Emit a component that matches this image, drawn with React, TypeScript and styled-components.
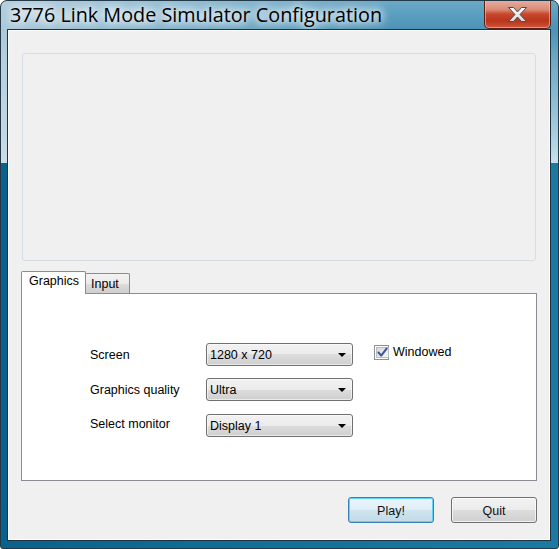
import React from "react";
import styled, { createGlobalStyle } from "styled-components";

const GlobalStyle = createGlobalStyle`
  html, body { margin: 0; padding: 0; width: 559px; height: 549px; overflow: hidden; background: #ffffff; }
  #root { width: 559px; height: 549px; }
  * { box-sizing: border-box; }
`;

const Window = styled.div`
  width: 559px;
  height: 549px;
  border: 1px solid #243a48;
  border-radius: 7px 7px 3px 3px;
  display: flex;
  flex-direction: column;
  overflow: hidden;
  background:
    linear-gradient(to right, #0a628c, #137099 50%, #1b7aa4) 0 162px / 100% 100% no-repeat,
    linear-gradient(to right, rgba(205, 220, 230, 0.75), rgba(205, 220, 230, 0.25) 45%, rgba(120, 180, 210, 0) 70%),
    linear-gradient(to bottom, #6aa9c7 0, #4c93b7 28px, #6fa9c5 60px, #a6cbdd 130px, #c7dfea 161px);
`;

const TitleBar = styled.div`
  height: 28px;
  flex: none;
  display: flex;
  align-items: flex-start;
`;

const Title = styled.div`
  margin: 1px 0 0 9px;
  font-family: "Open Sans", "Noto Sans", sans-serif;
  font-size: 19.8px;
  line-height: 26px;
  color: #000;
  white-space: nowrap;
  text-shadow: 0 0 8px #fff, 0 0 8px #fff, 0 0 14px rgba(255, 255, 255, 0.9);
`;

const CloseButton = styled.div`
  margin: -1px 7px 0 auto;
  width: 67px;
  height: 29px;
  border: 1px solid #5a2016;
  border-top: none;
  border-radius: 0 0 5px 5px;
  background: linear-gradient(to bottom, #e7b1a3 0%, #d98a75 35%, #c9482c 50%, #b9351c 75%, #d0583a 100%);
  box-shadow: inset 0 0 0 1px rgba(255, 200, 185, 0.55);
  display: flex;
  align-items: center;
  justify-content: center;
`;

const Client = styled.div`
  flex: 1;
  margin: 0 7px 7px 6px;
  border: 1px solid #1e3340;
  box-shadow: inset 0 0 0 1px #fbfdfe;
  background: #f0f0f0;
  padding: 0 13px;
  display: flex;
  flex-direction: column;
  font-family: "Liberation Sans", Arial, sans-serif;
  font-size: 12.5px;
  color: #000;
`;

const ImagePanel = styled.div`
  margin: 23px 1px 0 1px;
  height: 208px;
  border: 1px solid #d5dde6;
  border-radius: 3px;
  background: #f0f0f0;
`;

const TabStrip = styled.div`
  margin-top: 10px;
  height: 22px;
  display: flex;
  align-items: flex-end;
  position: relative;
  z-index: 1;
`;

const Tab = styled.div<{ $active?: boolean; $width: number }>`
  width: ${(p) => p.$width}px;
  height: ${(p) => (p.$active ? 23 : 20)}px;
  margin-bottom: ${(p) => (p.$active ? -1 : 0)}px;
  margin-left: ${(p) => (p.$active ? 0 : -1)}px;
  border: 1px solid #898c95;
  border-bottom: none;
  border-radius: 2px 2px 0 0;
  background: ${(p) =>
    p.$active ? "#ffffff" : "linear-gradient(to bottom, #f3f3f3 0%, #ebebeb 50%, #dddddd 51%, #cfcfcf 100%)"};
  padding: ${(p) => (p.$active ? "2px 0 0 7px" : "3px 0 0 5px")};
  line-height: 15px;
  position: relative;
  z-index: ${(p) => (p.$active ? 2 : 1)};
`;

const TabBody = styled.div`
  height: 188px;
  border: 1px solid #898c95;
  background: #ffffff;
  padding: 49px 0 0 68px;
`;

const FormGrid = styled.div`
  display: grid;
  grid-template-columns: 116px 168px auto;
  grid-template-rows: 23px 23px 23px;
  row-gap: 12px;
`;

const Label = styled.div<{ $nudge?: number }>`
  align-self: center;
  margin-top: ${(p) => p.$nudge ?? 0}px;
`;

const Combo = styled.div<{ $shift?: number }>`
  width: 147px;
  height: 23px;
  margin-top: ${(p) => p.$shift ?? 0}px;
  border: 1px solid #707070;
  border-radius: 3px;
  background: linear-gradient(to bottom, #f2f2f2 0%, #ebebeb 50%, #dddddd 50%, #cfcfcf 100%);
  box-shadow: inset 0 0 0 1px rgba(255, 255, 255, 0.55);
  display: flex;
  align-items: center;
  padding-left: 3px;
`;

const Arrow = styled.span`
  margin: 1px 6px 0 auto;
  width: 0;
  height: 0;
  border-left: 4px solid transparent;
  border-right: 4px solid transparent;
  border-top: 4px solid #000;
`;

const CheckRow = styled.div`
  display: flex;
  align-items: center;
  align-self: start;
  margin-top: 2px;
  gap: 4px;
  line-height: 15px;
`;

const CheckBox = styled.div`
  width: 15px;
  height: 15px;
  border: 1px solid #8f8f8f;
  background: #fff;
  padding: 1px;
  display: flex;
`;

const CheckInner = styled.div`
  flex: 1;
  border: 1px solid #b9bcc2;
  background: linear-gradient(135deg, #d5d8dd, #f7f7f7);
  display: flex;
  align-items: center;
  justify-content: center;
`;

const ButtonRow = styled.div`
  margin-top: 16px;
  display: flex;
  justify-content: flex-end;
  gap: 17px;
`;

const Button = styled.div<{ $default?: boolean }>`
  width: 86px;
  height: 26px;
  padding-top: 1px;
  border: 1px solid ${(p) => (p.$default ? "#3c7fb1" : "#707070")};
  border-radius: 3px;
  background: ${(p) =>
    p.$default
      ? "linear-gradient(to bottom, #eaf5fb 0%, #dfeef6 50%, #cfe4ef 51%, #c3dbe8 100%)"
      : "linear-gradient(to bottom, #f2f2f2 0%, #ebebeb 50%, #dddddd 51%, #cfcfcf 100%)"};
  box-shadow: ${(p) => (p.$default ? "inset 0 0 0 1px #5fd3f6" : "inset 0 0 0 1px rgba(255,255,255,0.7)")};
  display: flex;
  align-items: center;
  justify-content: center;
  color: #111;
`;

const CloseGlyph = () => (
  <svg width="21" height="17" viewBox="0 0 21 17">
    <defs>
      <linearGradient id="xg" x1="0" y1="0" x2="0" y2="1">
        <stop offset="0" stopColor="#ffffff" />
        <stop offset="1" stopColor="#d9d9d9" />
      </linearGradient>
    </defs>
    <polygon
      points="1.5,1.5 6.5,1.5 10.5,6 14.5,1.5 19.5,1.5 13,8.5 19.5,15.5 14.5,15.5 10.5,11 6.5,15.5 1.5,15.5 8,8.5"
      fill="url(#xg)"
      stroke="#4d4d4d"
      strokeWidth="1"
      strokeLinejoin="round"
    />
  </svg>
);

const CheckMark = () => (
  <svg width="11" height="11" viewBox="0 0 11 11">
    <path d="M1.5 5.5 L4.2 8.6 L9.6 1.6" fill="none" stroke="#3f5492" strokeWidth="2" strokeLinecap="round" strokeLinejoin="round" />
  </svg>
);

export default function App() {
  return (
    <>
      <GlobalStyle />
      <Window>
        <TitleBar>
          <Title>3776 Link Mode Simulator Configuration</Title>
          <CloseButton>
            <CloseGlyph />
          </CloseButton>
        </TitleBar>
        <Client>
          <ImagePanel />
          <TabStrip>
            <Tab $active $width={65}>Graphics</Tab>
            <Tab $width={45}>Input</Tab>
          </TabStrip>
          <TabBody>
            <FormGrid>
              <Label>Screen</Label>
              <Combo>
                1280 x 720
                <Arrow />
              </Combo>
              <CheckRow>
                <CheckBox>
                  <CheckInner>
                    <CheckMark />
                  </CheckInner>
                </CheckBox>
                Windowed
              </CheckRow>
              <Label>Graphics quality</Label>
              <Combo>
                Ultra
                <Arrow />
              </Combo>
              <div />
              <Label $nudge={-2}>Select monitor</Label>
              <Combo $shift={1}>
                Display 1
                <Arrow />
              </Combo>
              <div />
            </FormGrid>
          </TabBody>
          <ButtonRow>
            <Button $default>Play!</Button>
            <Button>Quit</Button>
          </ButtonRow>
        </Client>
      </Window>
    </>
  );
}
